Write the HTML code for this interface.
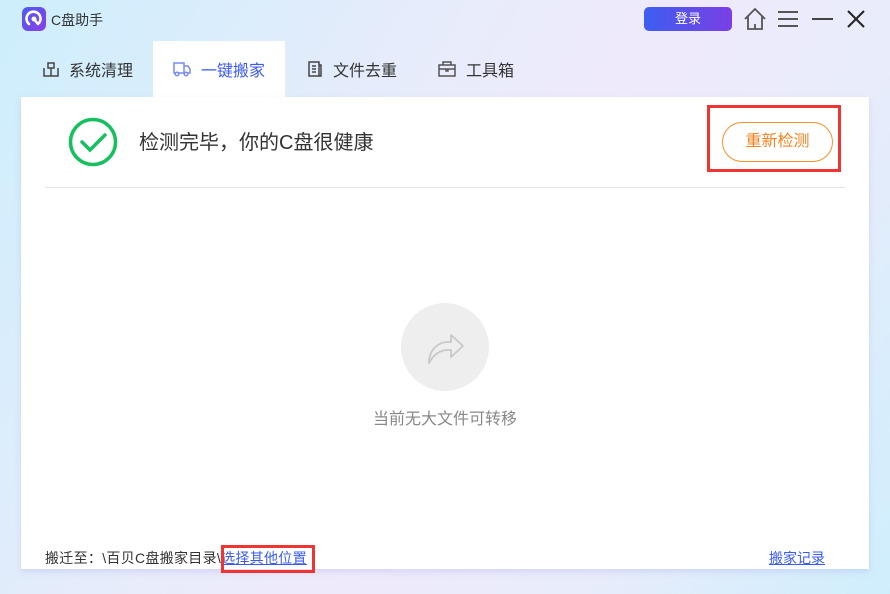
<!DOCTYPE html>
<html><head><meta charset="utf-8"><style>
*{margin:0;padding:0;box-sizing:border-box}
body{width:890px;height:594px;overflow:hidden;position:relative;font-family:"Liberation Sans","Noto Sans CJK SC",sans-serif;
background:linear-gradient(120deg,#cdeefc 0%,#e6ecfb 35%,#efeafb 55%,#e8ecfb 75%,#cfeefc 100%)}
.abs{position:absolute}
.tab{position:absolute;top:41px;height:56px;font-size:16px;color:#333;display:flex;align-items:center}
.panel{position:absolute;left:21px;top:97px;width:848px;height:472px;background:#fff;box-shadow:0 3px 6px rgba(150,150,230,.25)}
</style></head><body>
<div class="abs" style="left:22px;top:7px;width:24px;height:24px;border-radius:6px;background:linear-gradient(135deg,#4d5cf0,#8a3ee8)">
<svg width="24" height="24" viewBox="0 0 24 24"><path d="M7 17 A7 7 0 1 1 17 16" stroke="#fff" stroke-width="2.6" fill="none" stroke-linecap="round"/><circle cx="12" cy="12" r="2.5" fill="#fff"/><path d="M12 12 L16 17" stroke="#fff" stroke-width="2.6" stroke-linecap="round"/></svg></div>
<div class="abs" style="left:51px;top:10px;font-size:14px;color:#333">C盘助手</div>
<div class="abs" style="left:644px;top:7px;width:88px;height:24px;border-radius:5px;background:linear-gradient(90deg,#3d5ef0,#7a3fe6);color:#fff;font-size:13px;text-align:center;line-height:24px">登录</div>
<svg class="abs" style="left:743px;top:7px" width="24" height="24" viewBox="0 0 24 24" fill="none" stroke="#555" stroke-width="1.8"><path d="M2 12 L12 2 L22 12 M5 9 V22 H19 V9 M12 17 V22"/></svg>
<svg class="abs" style="left:777px;top:9px" width="22" height="20" viewBox="0 0 22 20" stroke="#555" stroke-width="2"><path d="M1 3H21M1 10H21M1 17H21"/></svg>
<div class="abs" style="left:812px;top:18px;width:21px;height:2px;background:#444"></div>
<svg class="abs" style="left:847px;top:10px" width="18" height="18" viewBox="0 0 18 18" stroke="#222" stroke-width="2"><path d="M1 1L17 17M17 1L1 17"/></svg>

<div class="tab" style="left:43px"><svg width="16" height="16" viewBox="0 0 16 16" fill="none" stroke="#444" stroke-width="1.5"><path d="M5 2H11V7H5ZM1 7V15H15V7M8 7V15"/></svg><span style="margin-left:10px">系统清理</span></div>
<div class="tab" style="left:153px;width:132px;background:#fff;padding-left:20px;color:#3b5bf0"><svg width="18" height="16" viewBox="0 0 18 16" fill="none" stroke="#7a8af2" stroke-width="1.5"><path d="M1 2H11V12H1ZM11 5H15L17 8V12H11"/><circle cx="4" cy="13" r="1.8" fill="#fff"/><circle cx="13" cy="13" r="1.8" fill="#fff"/></svg><span style="margin-left:10px">一键搬家</span></div>
<div class="tab" style="left:307px"><svg width="16" height="16" viewBox="0 0 16 16" fill="none" stroke="#444" stroke-width="1.5"><path d="M2 1H12V15H2ZM12 4H14V15H12M5 5H9M5 8H9M5 11H9"/></svg><span style="margin-left:10px">文件去重</span></div>
<div class="tab" style="left:438px"><svg width="18" height="16" viewBox="0 0 18 16" fill="none" stroke="#555" stroke-width="1.5"><path d="M1 4H17V15H1ZM5 4V1H13V4M1 8H17M8 8V10H10V8"/></svg><span style="margin-left:10px">工具箱</span></div>

<div class="panel">
<svg class="abs" style="left:47px;top:20px" width="50" height="50" viewBox="0 0 50 50" fill="none" stroke="#16c060" stroke-width="3.5"><circle cx="25" cy="25" r="22.5"/><path d="M14 25 L22 33 L37 18" stroke-linecap="round"/></svg>
<div class="abs" style="left:118px;top:29px;font-size:20px;color:#333">检测完毕，你的C盘很健康</div>
<div class="abs" style="left:686px;top:8px;width:134px;height:67px;border:3px solid #f03434"></div>
<div class="abs" style="left:701px;top:25px;width:111px;height:40px;border:1px solid #f5902a;border-radius:20px;color:#f5821f;font-size:16px;text-align:center;line-height:37px">重新检测</div>
<div class="abs" style="left:24px;top:90px;width:800px;height:1px;background:#e6e6e6"></div>
<div class="abs" style="left:380px;top:206px;width:88px;height:88px;border-radius:50%;background:#eeeeee">
<svg width="88" height="88" viewBox="0 0 88 88" fill="none" stroke="#c8c8c8" stroke-width="1.8" stroke-linejoin="round"><path d="M28 60 C28 46 38 38 50 39 V32 L62 43 L50 54 V47 C40 46 33 51 28 60Z"/></svg></div>
<div class="abs" style="left:0;width:848px;top:308px;text-align:center;font-size:16px;color:#888">当前无大文件可转移</div>
<div class="abs" style="left:24px;top:451px;font-size:14px;color:#333;letter-spacing:0.3px">搬迁至：\百贝C盘搬家目录\<span style="color:#3b5bf0;text-decoration:underline">选择其他位置</span></div>
<div class="abs" style="left:200px;top:448px;width:94px;height:28px;border:3px solid #f03434"></div>
<div class="abs" style="left:748px;top:451px;font-size:14px;color:#3b5bf0;text-decoration:underline">搬家记录</div>
</div>
</body></html>
